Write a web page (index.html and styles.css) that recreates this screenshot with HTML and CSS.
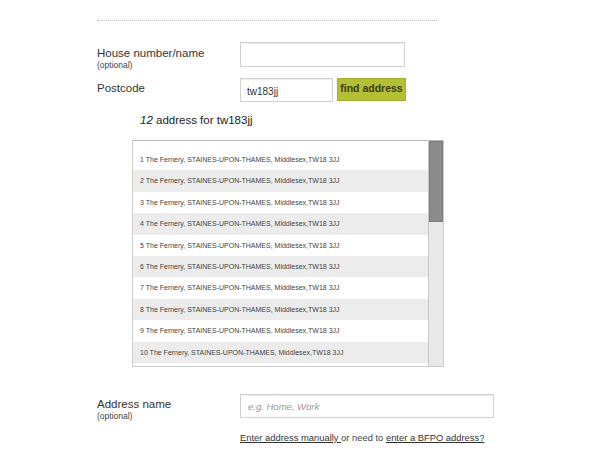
FILE: index.html
```html
<!DOCTYPE html>
<html>

<head>
	<title>Find address</title>
	<meta charset="utf-8">
	<link rel="stylesheet" href="styles.css">
</head>

<body>
	<div class="pagina">
		<div class="divisor"></div>

		<div class="linha linha-casa">
			<label class="rotulo">House number/name<span class="opcional">(optional)</span></label>
			<input class="campo campo-casa" type="text">
		</div>

		<div class="linha linha-cep">
			<label class="rotulo">Postcode</label>
			<div class="grupo">
				<input class="campo campo-cep" type="text" value="tw183jj">
				<button class="buscar">find address</button>
			</div>
		</div>

		<p class="resultado"><i>12</i> address for tw183jj</p>

		<div class="lista">
			<ul class="enderecos">
				<li>1 The Fernery, STAINES-UPON-THAMES, Middlesex,TW18 3JJ</li>
				<li>2 The Fernery, STAINES-UPON-THAMES, Middlesex,TW18 3JJ</li>
				<li>3 The Fernery, STAINES-UPON-THAMES, Middlesex,TW18 3JJ</li>
				<li>4 The Fernery, STAINES-UPON-THAMES, Middlesex,TW18 3JJ</li>
				<li>5 The Fernery, STAINES-UPON-THAMES, Middlesex,TW18 3JJ</li>
				<li>6 The Fernery, STAINES-UPON-THAMES, Middlesex,TW18 3JJ</li>
				<li>7 The Fernery, STAINES-UPON-THAMES, Middlesex,TW18 3JJ</li>
				<li>8 The Fernery, STAINES-UPON-THAMES, Middlesex,TW18 3JJ</li>
				<li>9 The Fernery, STAINES-UPON-THAMES, Middlesex,TW18 3JJ</li>
				<li>10 The Fernery, STAINES-UPON-THAMES, Middlesex,TW18 3JJ</li>
			</ul>
			<div class="barra">
				<div class="cursor"></div>
			</div>
		</div>

		<div class="linha linha-nome">
			<label class="rotulo">Address name<span class="opcional">(optional)</span></label>
			<input class="campo campo-nome" type="text" placeholder="e.g. Home, Work">
		</div>

		<p class="links"><a href="#">Enter address manually </a>or need to <a href="#">enter a BFPO address?</a></p>
	</div>
</body>

</html>
```
FILE: styles.css
```css
* {
	margin: 0;
	padding: 0;
	box-sizing: border-box;
}

body {
	background-color: #fff;
	font-family: "Liberation Sans", Arial, sans-serif;
	color: #333;
}

.pagina {
	padding-top: 20px;
	padding-left: 97px;
}

.divisor {
	width: 340px;
	border-top: 1px dotted #bbb;
}

.linha {
	display: grid;
	grid-template-columns: 143px auto;
	align-items: start;
}

.linha-casa {
	margin-top: 21px;
}

.linha-cep {
	margin-top: 8px;
}

.linha-nome {
	margin-top: 27px;
}

.rotulo {
	font-size: 11.5px;
	line-height: 16px;
	padding-top: 3px;
	color: #333;
}

.opcional {
	display: block;
	font-size: 8.5px;
	line-height: 9px;
	color: #444;
}

.linha-cep .rotulo {
	padding-top: 2px;
}

.campo {
	border: 1px solid #d2d2d2;
	box-shadow: inset 0 1px 1px #eee;
	font-family: "Liberation Sans", Arial, sans-serif;
	font-size: 10px;
	color: #333;
	padding: 0 6px;
	outline: none;
}

.campo-casa {
	width: 165px;
	height: 25px;
}

.grupo {
	display: flex;
	gap: 4px;
}

.campo-cep {
	width: 93px;
	height: 24px;
	padding-top: 3px;
}

.buscar {
	width: 69px;
	height: 23px;
	background-color: #b3bf35;
	border: 1px solid #a3ae2c;
	font-family: "Liberation Sans", Arial, sans-serif;
	font-size: 10.5px;
	font-weight: bold;
	color: #3a3d10;
	padding-bottom: 3px;
}

.resultado {
	margin-top: 10px;
	margin-left: 43px;
	font-size: 11.5px;
	line-height: 16px;
	color: #222;
}

.lista {
	display: flex;
	width: 312px;
	height: 227px;
	margin-top: 12px;
	margin-left: 35px;
	border: 1px solid #ccc;
	border-top-color: #bbb;
}

.enderecos {
	flex: 1;
	list-style: none;
	padding-top: 8px;
	overflow: hidden;
}

.enderecos li {
	height: 21.4px;
	line-height: 21.4px;
	padding-left: 7px;
	font-size: 7px;
	color: #444;
	white-space: nowrap;
}

.enderecos li:nth-child(even) {
	background-color: #ececec;
}

.barra {
	width: 15px;
	background-color: #e9e9e9;
	border-left: 1px solid #c8c8c8;
}

.cursor {
	height: 81px;
	background-color: #8b8b8b;
	border: 1px solid #7c7c7c;
}

.campo-nome {
	width: 254px;
	height: 24px;
	padding-left: 7px;
}

.campo-nome::placeholder {
	color: #999;
	font-style: italic;
	font-size: 9.5px;
}

.linha-nome .rotulo {
	padding-top: 2px;
}

.links {
	margin-top: 11px;
	margin-left: 143px;
	font-size: 9.4px;
	color: #444;
}

.links a {
	color: #333;
}
```
